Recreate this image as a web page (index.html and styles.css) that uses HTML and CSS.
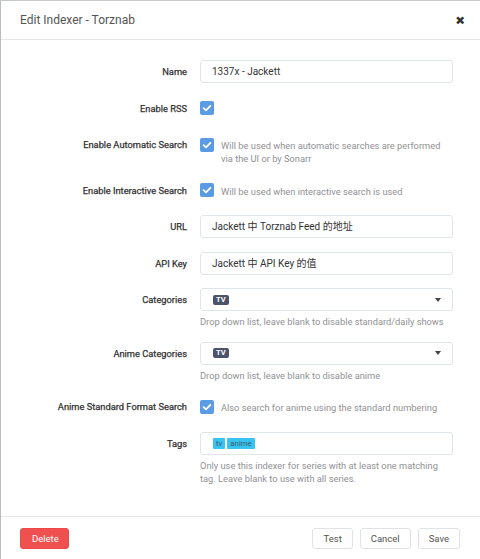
FILE: index.html
```html
<!DOCTYPE html>
<html lang="zh">
<head>
<meta charset="utf-8">
<title>Edit Indexer - Torznab</title>
<link rel="stylesheet" href="styles.css">
</head>
<body>
<div class="modal">
  <div class="modal-header">
    <div class="modal-title">Edit Indexer - Torznab</div>
    <span class="close">&#x2715;</span>
  </div>
  <div class="modal-body">
    <div class="form-group">
      <label class="label">Name</label>
      <div class="control"><div class="input">1337x - Jackett</div></div>
    </div>
    <div class="form-group">
      <label class="label">Enable RSS</label>
      <div class="control check-row"><span class="checkbox"><svg viewBox="0 0 14 14"><path d="M3.6 7.2 L6 9.4 L10.4 4.8" /></svg></span></div>
    </div>
    <div class="form-group">
      <label class="label">Enable Automatic Search</label>
      <div class="control check-row"><span class="checkbox"><svg viewBox="0 0 14 14"><path d="M3.6 7.2 L6 9.4 L10.4 4.8" /></svg></span><span class="check-help">Will be used when automatic searches are performed via the UI or by Sonarr</span></div>
    </div>
    <div class="form-group">
      <label class="label">Enable Interactive Search</label>
      <div class="control check-row"><span class="checkbox"><svg viewBox="0 0 14 14"><path d="M3.6 7.2 L6 9.4 L10.4 4.8" /></svg></span><span class="check-help">Will be used when interactive search is used</span></div>
    </div>
    <div class="form-group">
      <label class="label">URL</label>
      <div class="control"><div class="input">Jackett 中 Torznab Feed 的地址</div></div>
    </div>
    <div class="form-group">
      <label class="label">API Key</label>
      <div class="control"><div class="input">Jackett 中 API Key 的值</div></div>
    </div>
    <div class="form-group">
      <label class="label">Categories</label>
      <div class="control">
        <div class="input select"><span class="badge">TV</span><span class="caret"></span></div>
        <div class="help">Drop down list, leave blank to disable standard/daily shows</div>
      </div>
    </div>
    <div class="form-group">
      <label class="label">Anime Categories</label>
      <div class="control">
        <div class="input select"><span class="badge">TV</span><span class="caret"></span></div>
        <div class="help">Drop down list, leave blank to disable anime</div>
      </div>
    </div>
    <div class="form-group">
      <label class="label">Anime Standard Format Search</label>
      <div class="control check-row"><span class="checkbox"><svg viewBox="0 0 14 14"><path d="M3.6 7.2 L6 9.4 L10.4 4.8" /></svg></span><span class="check-help">Also search for anime using the standard numbering</span></div>
    </div>
    <div class="form-group">
      <label class="label">Tags</label>
      <div class="control">
        <div class="input tags"><span class="tag">tv</span><span class="tag">anime</span></div>
        <div class="help">Only use this indexer for series with at least one matching tag. Leave blank to use with all series.</div>
      </div>
    </div>
  </div>
  <div class="modal-footer">
    <button class="btn btn-danger">Delete</button>
    <div class="footer-right">
      <button class="btn">Test</button>
      <button class="btn">Cancel</button>
      <button class="btn">Save</button>
    </div>
  </div>
</div>
</body>
</html>
```
FILE: styles.css
```css
* { box-sizing: border-box; }
html, body { margin: 0; padding: 0; background: #fff; }
body {
  font-family: Roboto, "Noto Sans CJK SC", sans-serif;
  color: #505050;
  width: 480px;
  height: 559px;
  overflow: hidden;
}
.modal {
  height: 559px;
  border-top: 1px solid #c4c8cb;
  border-left: 1px solid #b9bdc0;
  display: flex;
  flex-direction: column;
}
.modal-header {
  height: 39px;
  border-bottom: 1px solid #e6e6e6;
  display: flex;
  align-items: center;
  justify-content: space-between;
  padding: 0 16px 0 19px;
}
.modal-title {
  font-size: 12px;
  color: #555;
}
.close {
  font-size: 9.5px;
  font-weight: 900;
  color: #333;
  -webkit-text-stroke: 1px #333;
}
.modal-body {
  flex: 1;
  padding: 20px 0 0 0;
}
.form-group {
  display: grid;
  grid-template-columns: 186px 253px;
  column-gap: 13px;
  margin-bottom: 13.5px;
  align-items: start;
}
.label {
  text-align: right;
  font-size: 9.3px;
  font-weight: 400;
  line-height: 23px;
  color: #333;
  -webkit-text-stroke: 0.25px #333;
}
.control { min-height: 23px; }
.input {
  height: 23px;
  border: 1px solid #dfe6e8;
  border-radius: 3px;
  padding: 0 11px;
  font-size: 10px;
  line-height: 21px;
  color: #333;
  white-space: nowrap;
}
.select {
  display: flex;
  align-items: center;
  justify-content: space-between;
  padding: 0 11px 0 12px;
}
.badge {
  background: #4b5469;
  color: #fff;
  font-size: 7.5px;
  font-weight: 700;
  line-height: 10px;
  padding: 0 3px;
  border-radius: 2px;
}
.caret {
  width: 0; height: 0;
  border-left: 3.5px solid transparent;
  border-right: 3.5px solid transparent;
  border-top: 4px solid #444;
}
.tags {
  display: flex;
  align-items: center;
  gap: 2px;
  padding: 0 12px;
}
.tag {
  background: #37c4f0;
  color: #3d5a70;
  font-size: 7.8px;
  line-height: 11px;
  padding: 0 3px;
  border-radius: 1px;
}
.help {
  font-size: 9.3px;
  line-height: 13px;
  color: #909293;
  margin-top: 4px;
}
.check-row {
  display: flex;
  align-items: flex-start;
  gap: 7px;
}
.checkbox {
  flex: none;
  width: 14px;
  height: 14px;
  margin-top: 4.5px;
  background: #5b9be3;
  border-radius: 2px;
  display: flex;
}
.checkbox svg {
  width: 14px; height: 14px;
  fill: none;
  stroke: #fff;
  stroke-width: 1.8;
  stroke-linecap: round;
  stroke-linejoin: round;
}
.check-help {
  font-size: 9.3px;
  line-height: 13px;
  color: #909293;
  padding-top: 6px;
}
.modal-footer {
  height: 43px;
  border-top: 1px solid #e6e6e6;
  display: flex;
  justify-content: space-between;
  align-items: flex-start;
  padding: 11px 20px 0 19px;
}
.footer-right { display: flex; gap: 7px; }
.btn {
  font-family: Roboto, sans-serif;
  height: 21px;
  border: 1px solid #e0e3e5;
  background: #fff;
  border-radius: 3px;
  font-size: 9.5px;
  color: #555;
  padding: 0 10px;
  margin: 0;
  cursor: pointer;
}
.btn-danger {
  background: #f05050;
  border-color: #ec4848;
  color: #fff;
  padding: 0 11px;
  width: 49px;
}
```
